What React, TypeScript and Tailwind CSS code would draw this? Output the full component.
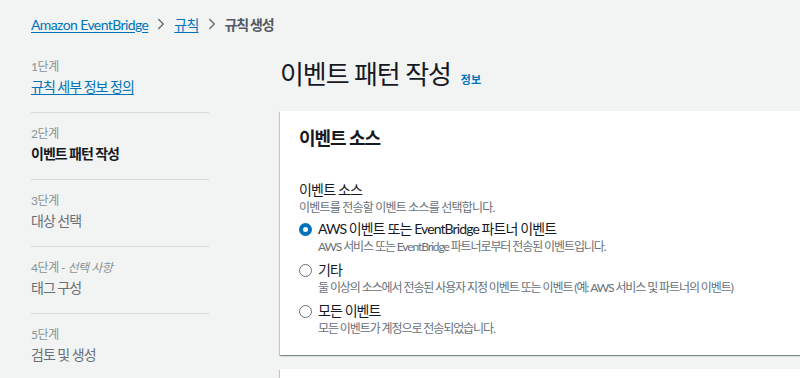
import { ChevronRight } from "lucide-react";

const font = { fontFamily: 'Lato, "Noto Sans CJK KR", "Noto Sans", sans-serif' };

interface Step {
  label: string;
  optional?: boolean;
  title: string;
  state: "done" | "current" | "todo";
}

const steps: Step[] = [
  { label: "1단계", title: "규칙 세부 정보 정의", state: "done" },
  { label: "2단계", title: "이벤트 패턴 작성", state: "current" },
  { label: "3단계", title: "대상 선택", state: "todo" },
  { label: "4단계", optional: true, title: "태그 구성", state: "todo" },
  { label: "5단계", title: "검토 및 생성", state: "todo" },
];

const sources = [
  {
    title: "AWS 이벤트 또는 EventBridge 파트너 이벤트",
    desc: "AWS 서비스 또는 EventBridge 파트너로부터 전송된 이벤트입니다.",
  },
  {
    title: "기타",
    desc: "둘 이상의 소스에서 전송된 사용자 지정 이벤트 또는 이벤트 (예: AWS 서비스 및 파트너의 이벤트)",
  },
  {
    title: "모든 이벤트",
    desc: "모든 이벤트가 계정으로 전송되었습니다.",
  },
];

const Radio = ({ checked }: { checked: boolean }) =>
  checked ? (
    <span className="mt-[4px] block h-[13px] w-[13px] shrink-0 rounded-full border-[4px] border-[#0073bb] bg-white" />
  ) : (
    <span className="mt-[4px] block h-[13px] w-[13px] shrink-0 rounded-full border-[1.5px] border-[#687078] bg-white" />
  );

const cardShadow =
  "shadow-[0_1px_1px_0_rgba(0,28,36,0.3),1px_1px_1px_0_rgba(0,28,36,0.15),-1px_1px_1px_0_rgba(0,28,36,0.15)]";

export default function App() {
  return (
    <div
      className="h-[378px] w-[800px] overflow-hidden bg-[#f2f3f3] text-[#16191f]"
      style={font}
    >
      {/* Breadcrumbs */}
      <nav className="flex h-[48px] items-center pl-[31px] text-[14px]">
        <a className="tracking-[-0.6px] text-[#0073bb] underline underline-offset-2">Amazon EventBridge</a>
        <ChevronRight size={18} strokeWidth={2} className="mx-[4px] text-[#687078]" />
        <a className="tracking-[-0.8px] text-[#0073bb] underline underline-offset-2">규칙</a>
        <ChevronRight size={18} strokeWidth={2} className="mx-[4px] text-[#687078]" />
        <span className="font-bold tracking-[-1.2px] text-[#545b64]">규칙 생성</span>
      </nav>

      <div className="flex">
        {/* Wizard steps */}
        <ol className="ml-[31px] w-[178px] shrink-0">
          {steps.map((s, i) => (
            <li
              key={s.label}
              className={`flex flex-col ${i === 0 ? "pt-[11px]" : "border-t border-[#d5dbdb] pt-[13px]"} pb-[15px]`}
            >
              <span className="text-[12px] leading-[16px] tracking-[-0.4px] text-[#879596]">
                {s.label}
                {s.optional && <i> - 선택 사항</i>}
              </span>
              <span
                className={`mt-[2px] text-[14px] leading-[20px] tracking-[-1px] ${
                  s.state === "done"
                    ? "text-[#0073bb] underline underline-offset-2"
                    : s.state === "current"
                      ? "font-bold text-[#16191f]"
                      : "text-[#687078]"
                }`}
              >
                {s.title}
              </span>
            </li>
          ))}
        </ol>

        {/* Main */}
        <main className="ml-[71px] flex-1">
          <div className="flex items-baseline gap-[10px] pt-[8px]">
            <h1 className="text-[26px] font-normal leading-[36px] tracking-[-1.1px]">이벤트 패턴 작성</h1>
            <a className="text-[11px] font-bold text-[#0073bb]">정보</a>
          </div>

          <section className={`mt-[19px] w-[600px] bg-white ${cardShadow}`}>
            <header className="px-[19px] pb-[16px] pt-[14px]">
              <h2 className="text-[18px] font-bold leading-[26px] tracking-[-1px]">이벤트 소스</h2>
            </header>
            <div className="px-[19px] pb-[18px] pt-[13px]">
              <div className="text-[14px] leading-[20px] tracking-[-0.8px]">이벤트 소스</div>
              <div className="text-[12px] leading-[16px] tracking-[-0.8px] text-[#687078]">
                이벤트를 전송할 이벤트 소스를 선택합니다.
              </div>
              <div className="mt-[3px] flex flex-col gap-[5px]">
                {sources.map((src, i) => (
                  <label key={src.title} className="flex gap-[6px]">
                    <Radio checked={i === 0} />
                    <span className="flex flex-col">
                      <span className="text-[14px] leading-[20px] tracking-[-0.9px]">{src.title}</span>
                      <span className="text-[12px] leading-[16px] tracking-[-1.1px] text-[#687078]">
                        {src.desc}
                      </span>
                    </span>
                  </label>
                ))}
              </div>
            </div>
          </section>

          <section className={`mt-[14px] h-[40px] w-[600px] bg-white ${cardShadow}`} />
        </main>
      </div>
    </div>
  );
}
